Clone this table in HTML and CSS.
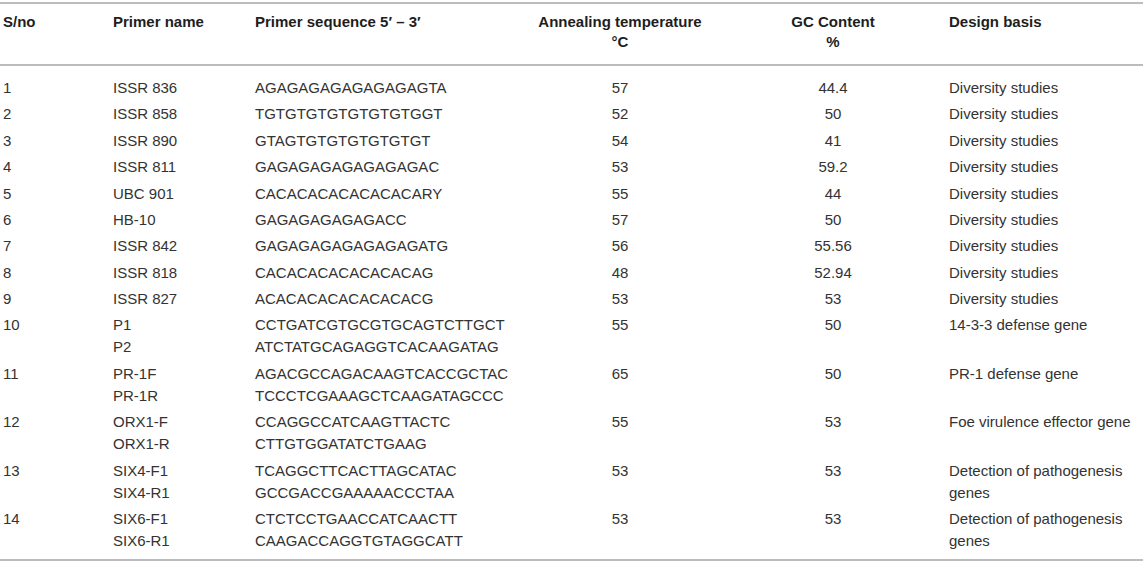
FILE: index.html
```html
<!DOCTYPE html>
<html lang="en">
<head>
    <meta charset="UTF-8">
    <meta name="viewport" content="width=device-width, initial-scale=1.0">
    <title>Primers used in this study</title>
    <link rel="stylesheet" href="styles.css">
</head>
<body>
    <table class="primer-table">
        <colgroup>
            <col class="c-no">
            <col class="c-name">
            <col class="c-seq">
            <col class="c-temp">
            <col class="c-gc">
            <col class="c-basis">
        </colgroup>
        <thead>
            <tr>
                <th>S/no</th>
                <th>Primer name</th>
                <th>Primer sequence 5′ – 3′</th>
                <th class="center">Annealing temperature<br>°C</th>
                <th class="center">GC Content<br>%</th>
                <th>Design basis</th>
            </tr>
        </thead>
        <tbody>
            <tr><td>1</td><td>ISSR 836</td><td>AGAGAGAGAGAGAGAGTA</td><td class="center">57</td><td class="center">44.4</td><td>Diversity studies</td></tr>
            <tr><td>2</td><td>ISSR 858</td><td>TGTGTGTGTGTGTGTGGT</td><td class="center">52</td><td class="center">50</td><td>Diversity studies</td></tr>
            <tr><td>3</td><td>ISSR 890</td><td>GTAGTGTGTGTGTGTGT</td><td class="center">54</td><td class="center">41</td><td>Diversity studies</td></tr>
            <tr><td>4</td><td>ISSR 811</td><td>GAGAGAGAGAGAGAGAC</td><td class="center">53</td><td class="center">59.2</td><td>Diversity studies</td></tr>
            <tr><td>5</td><td>UBC 901</td><td>CACACACACACACACARY</td><td class="center">55</td><td class="center">44</td><td>Diversity studies</td></tr>
            <tr><td>6</td><td>HB-10</td><td>GAGAGAGAGAGACC</td><td class="center">57</td><td class="center">50</td><td>Diversity studies</td></tr>
            <tr><td>7</td><td>ISSR 842</td><td>GAGAGAGAGAGAGAGATG</td><td class="center">56</td><td class="center">55.56</td><td>Diversity studies</td></tr>
            <tr><td>8</td><td>ISSR 818</td><td>CACACACACACACACAG</td><td class="center">48</td><td class="center">52.94</td><td>Diversity studies</td></tr>
            <tr><td>9</td><td>ISSR 827</td><td>ACACACACACACACACG</td><td class="center">53</td><td class="center">53</td><td>Diversity studies</td></tr>
            <tr><td>10</td><td>P1<br>P2</td><td>CCTGATCGTGCGTGCAGTCTTGCT<br>ATCTATGCAGAGGTCACAAGATAG</td><td class="center">55</td><td class="center">50</td><td>14-3-3 defense gene</td></tr>
            <tr><td>11</td><td>PR-1F<br>PR-1R</td><td>AGACGCCAGACAAGTCACCGCTAC<br>TCCCTCGAAAGCTCAAGATAGCCC</td><td class="center">65</td><td class="center">50</td><td>PR-1 defense gene</td></tr>
            <tr><td>12</td><td>ORX1-F<br>ORX1-R</td><td>CCAGGCCATCAAGTTACTC<br>CTTGTGGATATCTGAAG</td><td class="center">55</td><td class="center">53</td><td>Foe virulence effector gene</td></tr>
            <tr><td>13</td><td>SIX4-F1<br>SIX4-R1</td><td>TCAGGCTTCACTTAGCATAC<br>GCCGACCGAAAAACCCTAA</td><td class="center">53</td><td class="center">53</td><td>Detection of pathogenesis genes</td></tr>
            <tr><td>14</td><td>SIX6-F1<br>SIX6-R1</td><td>CTCTCCTGAACCATCAACTT<br>CAAGACCAGGTGTAGGCATT</td><td class="center">53</td><td class="center">53</td><td>Detection of pathogenesis genes</td></tr>
        </tbody>
    </table>
</body>
</html>
```

FILE: styles.css
```css
body {
    margin: 0;
    background-color: #ffffff;
    font-family: "Liberation Sans", Arial, sans-serif;
    font-size: 15px;
    color: #333333;
}
.primer-table {
    width: 100%;
    margin-top: 2px;
    border-collapse: collapse;
    table-layout: fixed;
    border-top: 2px solid #bcbcbc;
    border-bottom: 2px solid #bcbcbc;
}
.c-no { width: 110px; }
.c-name { width: 142px; }
.c-seq { width: 268px; }
.c-temp { width: 200px; }
.c-gc { width: 226px; }
.primer-table th {
    text-align: left;
    vertical-align: top;
    font-weight: bold;
    color: #1e1e1e;
    line-height: 20px;
    padding: 8px 3px 12px;
    border-bottom: 2px solid #bcbcbc;
}
.primer-table td {
    vertical-align: top;
    line-height: 22px;
    padding: 2.2px 3px;
}
.primer-table tbody tr:first-child td { padding-top: 11px; }
.primer-table tbody tr:last-child td { padding-bottom: 7px; }
.primer-table .center { text-align: center; }
```
